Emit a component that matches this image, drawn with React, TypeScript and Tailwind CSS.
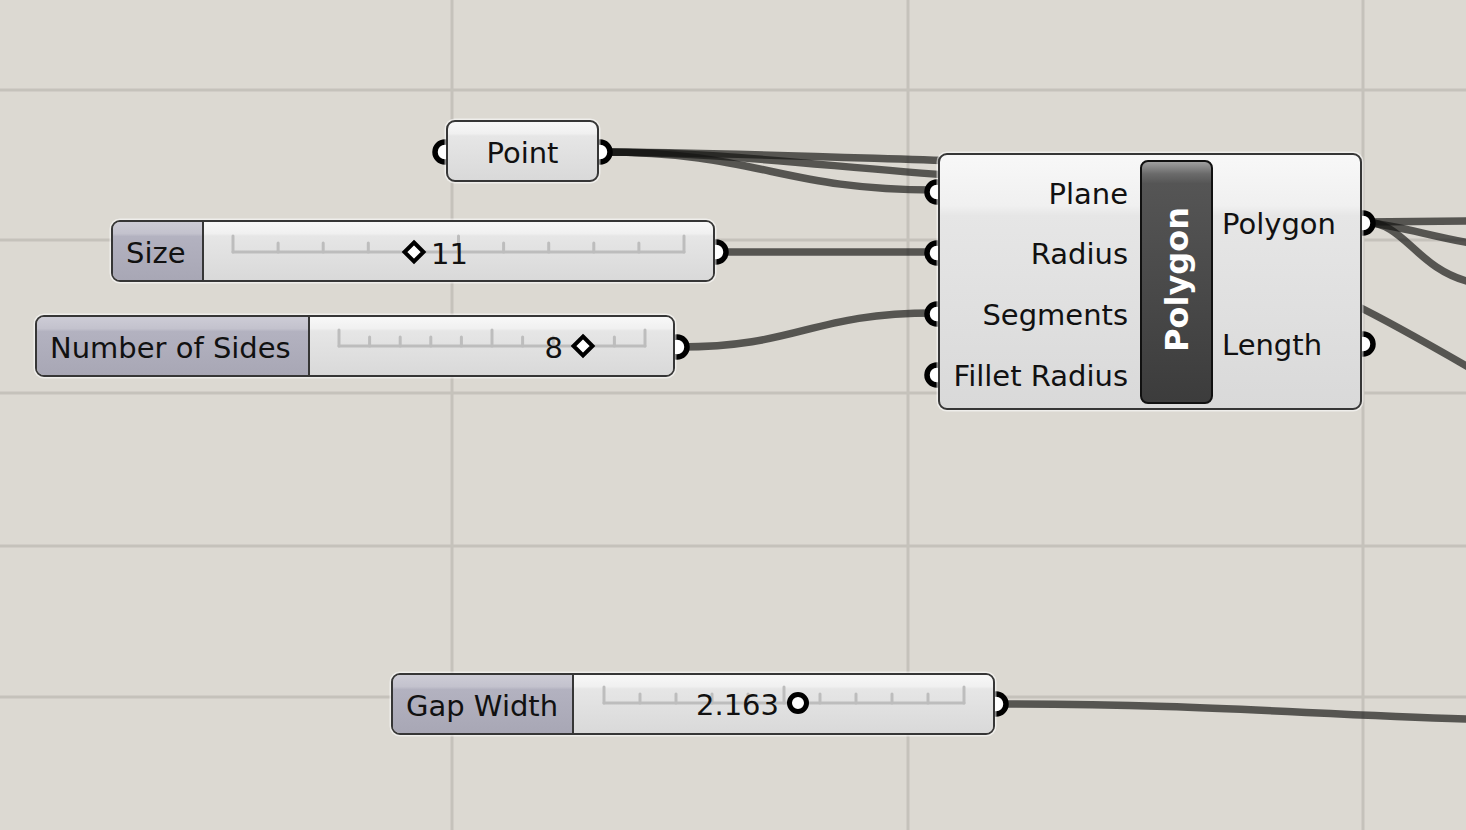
import React from "react";

const FONT = "font-['DejaVu_Sans',sans-serif]";
const NODE_BG =
  "bg-[linear-gradient(180deg,#f8f8f8_0%,#f0f0f0_20%,#e6e6e6_24%,#d9d9d9_100%)]";
const LABEL_BG =
  "bg-[linear-gradient(180deg,#cdccd6_0%,#c3c2cd_20%,#b3b2c0_25%,#a8a7b5_100%)]";

type SliderProps = {
  x: number;
  y: number;
  w: number;
  labelW: number;
  label: string;
  t0: number;
  t1: number;
  ty: number;
  value: string;
  hx: number;
  handle: "diamond" | "circle";
  textSide: "after" | "before";
  textEdge: number;
};

function Slider(p: SliderProps) {
  const h = 62;
  const ticks = Array.from({ length: 11 }, (_, i) => p.t0 + ((p.t1 - p.t0) * i) / 10);
  const hx = p.hx - p.x;
  const hy = p.ty - p.y;
  const textTop = p.ty + 2 - p.y - 2;
  const textStyle: React.CSSProperties =
    p.textSide === "after"
      ? { left: p.textEdge - p.x - 2, top: textTop }
      : { right: p.x + p.w - 2 - p.textEdge, top: textTop };
  return (
    <div
      className={`absolute flex rounded-[9px] border-2 border-[#363636] shadow-[0_0_0_1.5px_rgba(255,255,255,0.55)] overflow-hidden ${FONT} text-[29px] text-[#111]`}
      style={{ left: p.x, top: p.y, width: p.w, height: h }}
    >
      <div
        className={`flex items-center pl-[13px] pt-[5px] border-r-2 border-[#363636] whitespace-nowrap ${LABEL_BG}`}
        style={{ width: p.labelW }}
      >
        {p.label}
      </div>
      <div className={`relative flex-1 ${NODE_BG}`} />
      <svg
        className="absolute left-[-2px] top-[-2px] pointer-events-none"
        width={p.w}
        height={h}
      >
        <line
          x1={p.t0 - p.x}
          y1={hy}
          x2={p.t1 - p.x}
          y2={hy}
          stroke="#bdbdbd"
          strokeWidth={3}
          strokeLinecap="round"
        />
        {ticks.map((tx, i) => {
          const major = i === 0 || i === 5 || i === 10;
          return (
            <line
              key={i}
              x1={tx - p.x}
              y1={hy - (major ? 16 : 9)}
              x2={tx - p.x}
              y2={hy}
              stroke="#bdbdbd"
              strokeWidth={3}
              strokeLinecap="round"
            />
          );
        })}
        {p.handle === "diamond" ? (
          <polygon
            points={`${hx},${hy - 9.5} ${hx + 9.5},${hy} ${hx},${hy + 9.5} ${hx - 9.5},${hy}`}
            fill="#fff"
            stroke="#000"
            strokeWidth={4}
            strokeLinejoin="miter"
          />
        ) : (
          <circle cx={hx} cy={hy} r={8.5} fill="#fff" stroke="#000" strokeWidth={5} />
        )}
      </svg>
      <span
        className="absolute leading-none -translate-y-1/2 whitespace-nowrap"
        style={textStyle}
      >
        {p.value}
      </span>
    </div>
  );
}

const wires = [
  "M600 152 C 760 152, 780 190, 935 190",
  "M600 152 C 700 152, 800 156, 960 161",
  "M600 152 C 720 152, 820 166, 960 176",
  "M716 252 L 935 252",
  "M679 347 C 800 347, 810 313, 935 313",
  "M997 704 C 1200 704, 1300 714, 1470 719",
  "M1364 222 L 1470 221",
  "M1364 222 C 1400 226, 1430 236, 1470 243",
  "M1364 222 C 1405 222, 1415 268, 1470 282",
  "M1355 305 C 1390 322, 1430 345, 1470 368",
];

const grips: [number, number][] = [
  [445, 152],
  [600, 152],
  [716, 252],
  [677, 347],
  [937, 192],
  [937, 253],
  [937, 314],
  [937, 375],
  [1363, 223],
  [1363, 344],
  [996, 704],
];

export default function App() {
  return (
    <div className={`relative w-[1466px] h-[830px] overflow-hidden bg-[#dcd9d2] ${FONT}`}>
      <svg className="absolute left-0 top-0" width={1466} height={830}>
        {[90, 240, 393, 546, 697].map((y) => (
          <line key={"h" + y} x1={0} y1={y} x2={1466} y2={y} stroke="#c5c2bb" strokeWidth={3} />
        ))}
        {[452, 908, 1363].map((x) => (
          <line key={"v" + x} x1={x} y1={0} x2={x} y2={830} stroke="#c5c2bb" strokeWidth={3} />
        ))}
        {wires.map((d, i) => (
          <path key={i} d={d} fill="none" stroke="#141412" strokeOpacity={0.67} strokeWidth={7.5} />
        ))}
        {grips.map(([x, y], i) => (
          <circle key={i} cx={x} cy={y} r={10} fill="#fff" stroke="#000" strokeWidth={5.5} />
        ))}
      </svg>

      {/* Point */}
      <div
        className={`absolute left-[446px] top-[120px] w-[153px] h-[62px] flex items-center justify-center pt-[5px] rounded-[9px] border-2 border-[#363636] shadow-[0_0_0_1.5px_rgba(255,255,255,0.55)] ${NODE_BG} text-[29px] text-[#111]`}
      >
        Point
      </div>

      <Slider
        x={111}
        y={220}
        w={604}
        labelW={91}
        label="Size"
        t0={233}
        t1={684}
        ty={252}
        value="11"
        hx={414}
        handle="diamond"
        textSide="after"
        textEdge={431}
      />

      <Slider
        x={35}
        y={315}
        w={640}
        labelW={273}
        label="Number of Sides"
        t0={339}
        t1={645}
        ty={346}
        value="8"
        hx={583}
        handle="diamond"
        textSide="before"
        textEdge={563}
      />

      <Slider
        x={391}
        y={673}
        w={604}
        labelW={181}
        label="Gap Width"
        t0={604}
        t1={964}
        ty={703}
        value="2.163"
        hx={798}
        handle="circle"
        textSide="before"
        textEdge={779}
      />

      {/* Polygon component */}
      <div
        className={`absolute left-[938px] top-[153px] w-[424px] h-[257px] flex rounded-[9px] border-2 border-[#363636] shadow-[0_0_0_1.5px_rgba(255,255,255,0.55)] ${NODE_BG} text-[29px] text-[#111]`}
      >
        <div className="w-[200px] flex flex-col items-end pt-[9px] pb-[1px] pr-[12px]">
          {["Plane", "Radius", "Segments", "Fillet Radius"].map((t) => (
            <div key={t} className="flex-1 flex items-center whitespace-nowrap">
              {t}
            </div>
          ))}
        </div>
        <div className="w-[73px] mt-[5px] mb-[4px] rounded-[8px] border-2 border-[#111] bg-[linear-gradient(180deg,#a0a0a0_0%,#6a6a6a_5%,#555555_9%,#4a4a4a_50%,#3c3c3c_100%)] flex items-center justify-center pb-[6px]">
          <span className="[writing-mode:vertical-rl] rotate-180 font-bold text-white text-[32px] leading-none">
            Polygon
          </span>
        </div>
        <div className="w-[147px] flex flex-col pt-[9px] pb-[2px] pl-[9px]">
          {["Polygon", "Length"].map((t) => (
            <div key={t} className="flex-1 flex items-center whitespace-nowrap">
              {t}
            </div>
          ))}
        </div>
      </div>
    </div>
  );
}
